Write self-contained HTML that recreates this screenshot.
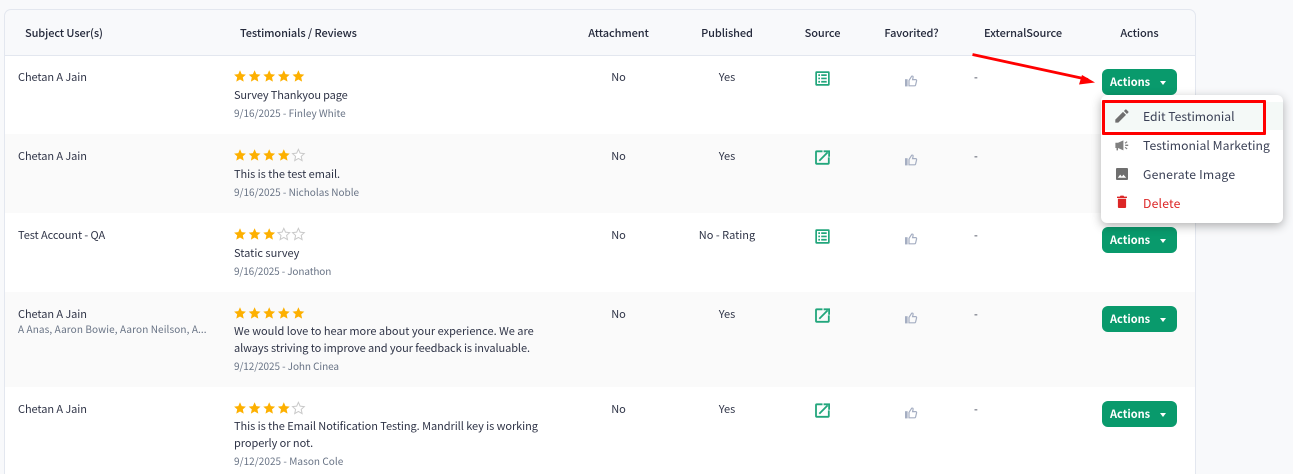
<!DOCTYPE html>
<html><head><meta charset="utf-8">
<style>
html,body{margin:0;padding:0}
body{width:1293px;height:474px;overflow:hidden;position:relative;background:#f8f9fb;font-family:"Noto Sans CJK JP","Liberation Sans",sans-serif;font-size:11px;color:#2f3447;letter-spacing:0}
.t{position:absolute;white-space:nowrap;line-height:16px}
.c{transform:translateX(-50%)}
.b{position:absolute;left:5px;width:1190px}
.h{color:#252a3c;font-weight:500;letter-spacing:-.1px}
.s{font-size:10px;color:#687385;letter-spacing:0}
.btn{position:absolute;left:1102px;width:75px;height:26px;background:#099a6c;border-radius:6px;color:#fff;font-weight:700;line-height:26px;font-size:11px}
.btn span{position:absolute;left:8px;top:0}
.btn i{position:absolute;left:58px;top:11.5px;border:3.5px solid transparent;border-top:4px solid #fff;border-bottom:0}
svg{position:absolute;overflow:visible}
.m{font-size:12.2px;color:#3b4156;line-height:18px}
</style></head><body>
<svg width="0" height="0" style="left:0;top:0"><defs>
<polygon id="st" points="6,0.3 7.7,4.1 11.9,4.6 8.8,7.4 9.7,11.6 6,9.5 2.3,11.6 3.2,7.4 0.1,4.6 4.3,4.1"/>
<g id="th" fill="none" stroke="#a5aec2" stroke-width="1.2"><rect x="0.6" y="4.8" width="1.4" height="6" fill="#a5aec2"/><path d="M4 5.4 6.7 1.2c.9-.4 1.6.2 1.4 1.1L7.6 4.6h3c.7 0 1.1.6 1 1.2l-1 4.200c-.1.5-.5.8-1 .8H4z"/></g>
<g id="f1"><rect x="0.3" y="0.3" width="14.4" height="14.4" rx="1.200" fill="#22a67c"/><rect x="2" y="2" width="11" height="11" fill="#fff"/><path d="M3.300 3.300h1.700v1.700H3.300zM6.200 3.300h5.500v1.700H6.200zM3.300 6.600h1.700v1.700H3.300zM6.200 6.600h5.500v1.700H6.200zM3.300 9.900h1.700v1.700H3.300zM6.200 9.900h5.500v1.700H6.200z" fill="#22a67c"/></g>
<g id="f2" fill="none" stroke="#22a67c" stroke-width="1.800"><path d="M7.500 1.300H1.800a.8.8 0 0 0-.8.8v10.900c0 .5.3.8.8.8h11.200c.5 0 .8-.3.8-.8V7.400"/><path d="M4.300 10.700 12.600 2.400"/><path d="M8.600 1.300h5.500v5.500"/></g>
</defs></svg>

<div class="b" style="top:9px;height:465px;background:#f8f9fb;border:1px solid #e3e7ef;border-bottom:0;border-radius:7px 7px 0 0;box-sizing:border-box;left:4px;width:1192px"></div>
<div class="b" style="top:55px;height:1px;background:#e3e7ef"></div>
<div class="b" style="top:56px;height:78px;background:#fff"></div>
<div class="b" style="top:134px;height:79px;background:#fafafa"></div>
<div class="b" style="top:213px;height:79px;background:#fff"></div>
<div class="b" style="top:292px;height:95px;background:#fafafa"></div>
<div class="b" style="top:387px;height:87px;background:#fff"></div>

<div class="t h" style="left:25px;top:25px">Subject User(s)</div>
<div class="t h" style="left:240px;top:25px">Testimonials / Reviews</div>
<div class="t h c" style="left:618.500px;top:25px">Attachment</div>
<div class="t h c" style="left:727px;top:25px">Published</div>
<div class="t h c" style="left:822.500px;top:25px">Source</div>
<div class="t h c" style="left:911.500px;top:25px">Favorited?</div>
<div class="t h c" style="left:1023px;top:25px">ExternalSource</div>
<div class="t h c" style="left:1139.500px;top:25px">Actions</div>

<!-- Row 1 -->
<div class="t" style="left:18px;top:69px;letter-spacing:-.08px">Chetan A Jain</div>
<svg style="left:234px;top:70px" width="72" height="12" fill="#fdb000"><use href="#st"/><use href="#st" x="14.6"/><use href="#st" x="29.2"/><use href="#st" x="43.8"/><use href="#st" x="58.4"/></svg>
<div class="t" style="left:234px;top:87px;letter-spacing:-.15px">Survey Thankyou page</div>
<div class="t s" style="left:234px;top:105px">9/16/2025 - Finley White</div>
<div class="t c" style="left:618.500px;top:69px">No</div>
<div class="t c" style="left:727px;top:69px">Yes</div>
<svg style="left:815px;top:71px" width="15" height="15"><use href="#f1"/></svg>
<svg style="left:905px;top:75px" width="13" height="12"><use href="#th"/></svg>
<div class="t" style="left:974px;top:69px">-</div>

<!-- Row 2 -->
<div class="t" style="left:18px;top:148px;letter-spacing:-.08px">Chetan A Jain</div>
<svg style="left:234px;top:149px" width="72" height="12" fill="#fdb000"><use href="#st"/><use href="#st" x="14.6"/><use href="#st" x="29.2"/><use href="#st" x="43.8"/><use href="#st" x="58.4" fill="#fff" stroke="#c9c9c9"/></svg>
<div class="t" style="left:234px;top:166px;letter-spacing:-.05px">This is the test email.</div>
<div class="t s" style="left:234px;top:184px">9/16/2025 - Nicholas Noble</div>
<div class="t c" style="left:618.500px;top:148px">No</div>
<div class="t c" style="left:727px;top:148px">Yes</div>
<svg style="left:815px;top:150px" width="15" height="15"><use href="#f2"/></svg>
<svg style="left:905px;top:154px" width="13" height="12"><use href="#th"/></svg>
<div class="t" style="left:974px;top:148px">-</div>

<!-- Row 3 -->
<div class="t" style="left:18px;top:227px;letter-spacing:-.08px">Test Account - QA</div>
<svg style="left:234px;top:228px" width="72" height="12" fill="#fdb000"><use href="#st"/><use href="#st" x="14.6"/><use href="#st" x="29.2"/><use href="#st" x="43.8" fill="#fff" stroke="#c9c9c9"/><use href="#st" x="58.4" fill="#fff" stroke="#c9c9c9"/></svg>
<div class="t" style="left:234px;top:245px">Static survey</div>
<div class="t s" style="left:234px;top:263px;letter-spacing:-.12px">9/16/2025 - Jonathon</div>
<div class="t c" style="left:618.500px;top:227px">No</div>
<div class="t c" style="left:727px;top:227px">No - Rating</div>
<svg style="left:815px;top:229px" width="15" height="15"><use href="#f1"/></svg>
<svg style="left:905px;top:233px" width="13" height="12"><use href="#th"/></svg>
<div class="t" style="left:974px;top:227px">-</div>
<div class="btn" style="top:227px"><span>Actions</span><i></i></div>

<!-- Row 4 -->
<div class="t" style="left:18px;top:306px;letter-spacing:-.08px">Chetan A Jain</div>
<div class="t s" style="left:18px;top:321px;letter-spacing:.1px">A Anas, Aaron Bowie, Aaron Neilson, A...</div>
<svg style="left:234px;top:307px" width="72" height="12" fill="#fdb000"><use href="#st"/><use href="#st" x="14.6"/><use href="#st" x="29.2"/><use href="#st" x="43.8"/><use href="#st" x="58.4"/></svg>
<div class="t" style="left:234px;top:323px">We would love to hear more about your experience. We are</div>
<div class="t" style="left:234px;top:340px;letter-spacing:-.08px">always striving to improve and your feedback is invaluable.</div>
<div class="t s" style="left:234px;top:358px;letter-spacing:-.08px">9/12/2025 - John Cinea</div>
<div class="t c" style="left:618.500px;top:306px">No</div>
<div class="t c" style="left:727px;top:306px">Yes</div>
<svg style="left:815px;top:308px" width="15" height="15"><use href="#f2"/></svg>
<svg style="left:905px;top:312px" width="13" height="12"><use href="#th"/></svg>
<div class="t" style="left:974px;top:306px">-</div>
<div class="btn" style="top:306px"><span>Actions</span><i></i></div>

<!-- Row 5 -->
<div class="t" style="left:18px;top:401px;letter-spacing:-.08px">Chetan A Jain</div>
<svg style="left:234px;top:402px" width="72" height="12" fill="#fdb000"><use href="#st"/><use href="#st" x="14.6"/><use href="#st" x="29.2"/><use href="#st" x="43.8"/><use href="#st" x="58.4" fill="#fff" stroke="#c9c9c9"/></svg>
<div class="t" style="left:234px;top:418px;letter-spacing:-.06px">This is the Email Notification Testing. Mandrill key is working</div>
<div class="t" style="left:234px;top:435px;letter-spacing:-.05px">properly or not.</div>
<div class="t s" style="left:234px;top:453px;letter-spacing:.05px">9/12/2025 - Mason Cole</div>
<div class="t c" style="left:618.500px;top:401px">No</div>
<div class="t c" style="left:727px;top:401px">Yes</div>
<svg style="left:815px;top:403px" width="15" height="15"><use href="#f2"/></svg>
<svg style="left:905px;top:407px" width="13" height="12"><use href="#th"/></svg>
<div class="t" style="left:974px;top:401px">-</div>
<div class="btn" style="top:401px"><span>Actions</span><i></i></div>

<div class="btn" style="top:69px"><span>Actions</span><i></i></div>

<!-- Dropdown -->
<div style="position:absolute;left:1101px;top:95px;width:182px;height:128px;background:#fff;border-radius:6px;box-shadow:0 3px 10px rgba(0,0,0,.3)"></div>
<div style="position:absolute;left:1101px;top:102px;width:182px;height:28px;background:#f4f9f7"></div>
<svg style="left:1115px;top:109px" width="14" height="14" fill="#6f6f6f"><path d="M0.300 10.600V13.600H3.300L11 5.900 8 2.900zM11.900 5 13.300 3.600c.3-.3.3-.8 0-1.100L11.400.6c-.3-.3-.8-.3-1.100 0L8.900 2z"/></svg>
<svg style="left:1115px;top:140px" width="14" height="12" fill="#808080"><path d="M0.400 2.800H3L8.400.4V10.400L3 8V10.400H1.500V8H.4z"/><rect x="10.200" y="4.600" width="3" height="1.400"/><path d="M9.700 2.800 11.800 1.200l.7.9-2.100 1.600zM9.700 7.800l2.100 1.600.7-.9-2.100-1.600z"/></svg>
<svg style="left:1116px;top:168px" width="12" height="12"><rect width="12" height="12" rx="1" fill="#6f6f6f"/><path d="M1.800 9.800 4.200 6.600l1.700 2 1.500-2 2.800 3.200z" fill="#fff"/></svg>
<svg style="left:1117px;top:195px" width="10" height="13" fill="#dc2626"><path d="M0 1.600H2.800L3.500.6H6.500L7.200 1.600H10V3H0zM.9 3.800H9.100V12c0 .6-.4 1-1 1H1.900c-.6 0-1-.4-1-1z"/></svg>
<div class="t m" style="left:1143px;top:107px">Edit Testimonial</div>
<div class="t m" style="left:1143px;top:136px;letter-spacing:.05px">Testimonial Marketing</div>
<div class="t m" style="left:1143px;top:165px;letter-spacing:.2px">Generate Image</div>
<div class="t m" style="left:1143px;top:194px;letter-spacing:.2px;color:#dc2626">Delete</div>

<!-- Annotations -->
<div style="position:absolute;left:1102px;top:100px;width:164px;height:35px;border:3px solid #f00;box-sizing:border-box;border-radius:1px"></div>
<svg style="left:0;top:0" width="1293" height="474"><path d="M972.500 54.500 1088 79.500" stroke="#f00" stroke-width="2.800" fill="none"/><polygon points="1095,82.500 1079,84.500 1082,75" fill="#f00"/></svg>
</body></html>
